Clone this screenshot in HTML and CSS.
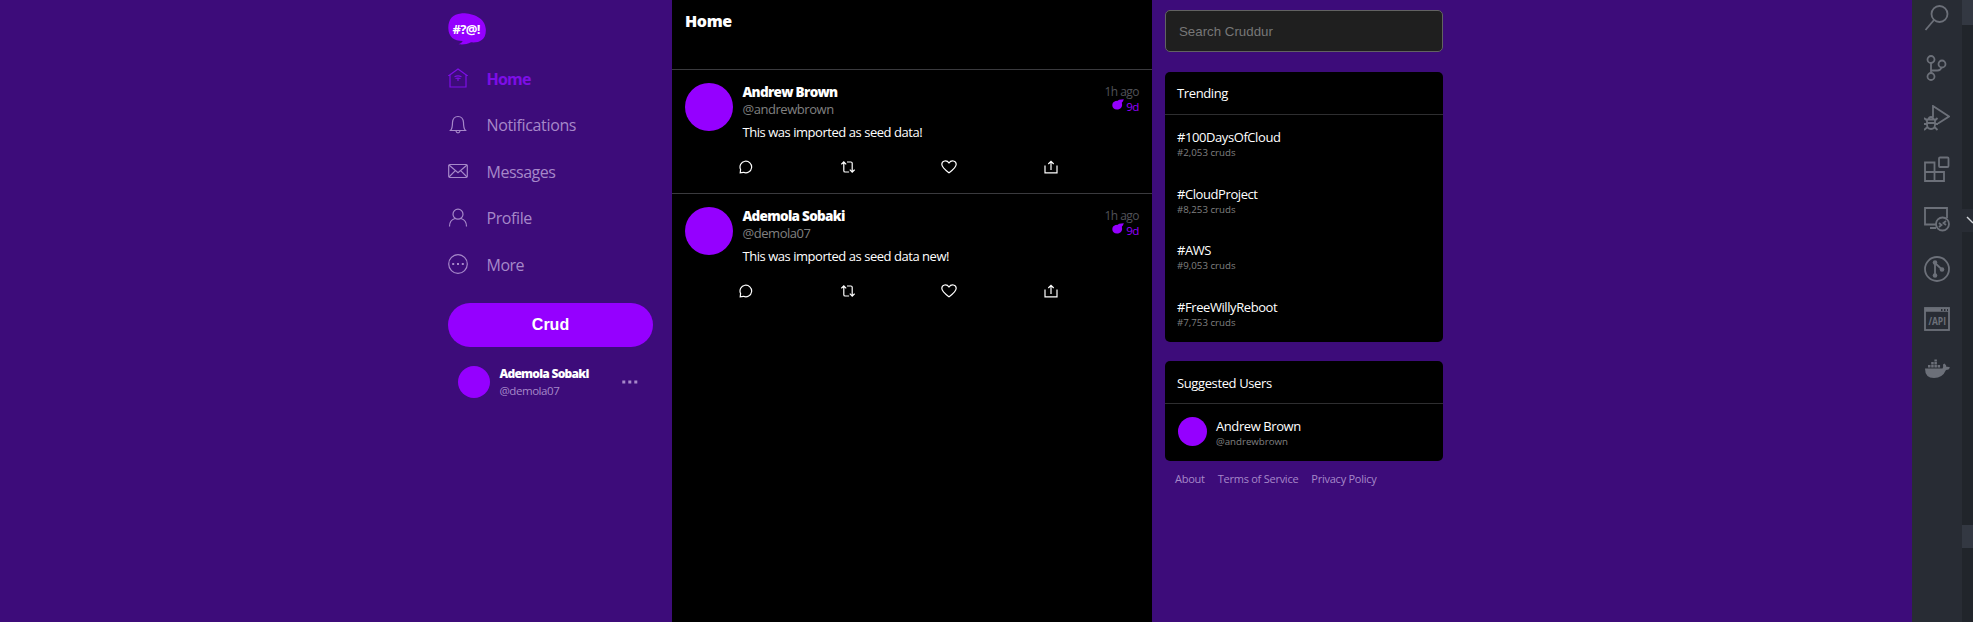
FILE: index.html
```
<!DOCTYPE html>
<html lang="en">
<head>
<meta charset="utf-8">
<title>Cruddur</title>
<link rel="stylesheet" href="styles.css">
</head>
<body>
<svg class="defs" aria-hidden="true">
  <symbol id="comment" viewBox="0 0 14 14"><path d="M1.200 12.800l.4-3.300A5.800 5.800 0 1 1 4.500 12.300z"/></symbol>
  <symbol id="repost" viewBox="0 0 14 14"><path d="M.4 4.300L2.800 1.900l2.400 2.400M2.800 2v8.700q0 1.300 1.300 1.300h4M6 2h3.900q1.300 0 1.300 1.300v8.700M8.800 9.700L11.200 12.100l2.400-2.400"/></symbol>
  <symbol id="heart" viewBox="0 0 16 14"><path d="M8 12.800C4.500 10.200.8 7.500.8 4.300.8.600 5.800-.300 8 3c2.200-3.300 7.200-2.400 7.200 1.300 0 3.200-3.700 5.900-7.200 8.500z"/></symbol>
  <symbol id="share" viewBox="0 0 14 14"><path d="M1 5.500v7.300h12V5.500M7 10V1.500M4.300 4L7 1.300 9.700 4"/></symbol>
  <symbol id="bomb" viewBox="0 0 12 12"><path fill="currentColor" stroke="none" d="M3.500 2L5.800 1.800 7 .800 11.800.300 11 2.300 9.800 3.700C11 8 8.500 10.500 5 10.500 2 10.500.300 8.500.300 6.200.300 4.200 1.500 2.600 3.500 2z"/></symbol>
</svg>
<div class="screen">
  <main class="app">
    <nav class="sidebar">
      <svg class="logo" viewBox="0 0 38 32"><path d="M13 .400C23-.300 37 4 37.800 16 38.500 27 31 30 23 29.300 19 31.500 15 31.700 10.500 31.300 13 30.300 14.500 29 14.600 28 6 28 .500 24 .300 15 .2 6 5 1 13 .400z"/><text x="4.500" y="20.500" textLength="28">#?@!</text></svg>
      <a class="link active"><svg viewBox="0 0 20 20"><path d="M1 7.500L10 1l9 6.500H18V19H2V7.500zM6.500 8.700q3.500-1.500 7 0M7.500 10.500q2.500-1 5 0M10 10v3"/></svg><span class="t-home">Home</span></a>
      <a class="link"><svg viewBox="0 0 20 20"><path d="M2.500 15.500q2-2 2-8Q5 1.500 10 1.500t5.500 6q0 6 2 8zM8 16q.300 1.800 2 1.800t2-1.800"/></svg><span class="t-notif">Notifications</span></a>
      <a class="link"><svg viewBox="0 0 20 20"><rect x=".7" y="3.500" width="18.600" height="13" rx="1.200"/><path d="M1 4l9 7.800L19 4M1 16l6.300-6.400M19 16l-6.300-6.400"/></svg><span class="t-msg">Messages</span></a>
      <a class="link"><svg viewBox="0 0 20 20"><circle cx="10" cy="6.200" r="5"/><path d="M1.500 18.500q0-6.500 5.500-8M18.500 18.500q0-6.500-5.500-8"/></svg><span class="t-prof">Profile</span></a>
      <a class="link"><svg viewBox="0 0 20 20"><circle cx="10" cy="10" r="9.300"/><path class="dots" d="M4.200 9h2v2h-2zM9 9h2v2H9zM13.800 9h2v2h-2z"/></svg><span class="t-more">More</span></a>
      <button class="crud">Crud</button>
      <div class="profile">
        <div class="avatar"></div>
        <div class="who"><b>Ademola Sobaki</b><span>@demola07</span></div>
        <svg class="more" viewBox="0 0 16 4"><path d="M.3.500h3v3h-3zM6.300.500h3v3h-3zM12.300.500h3v3h-3z"/></svg>
      </div>
    </nav>
    <section class="feed">
      <h1 class="heading"><span>Home</span></h1>
      <article class="activity">
        <div class="avatar"></div>
        <div class="body">
          <div class="name">Andrew Brown</div>
          <div class="handle">@andrewbrown</div>
          <p class="message">This was imported as seed data!</p>
          <div class="actions"><svg><use href="#comment"/></svg><svg><use href="#repost"/></svg><svg class="wide"><use href="#heart"/></svg><svg><use href="#share"/></svg></div>
        </div>
        <div class="times"><div class="ago">1h ago</div><div class="expires"><svg><use href="#bomb"/></svg><span>9d</span></div></div>
      </article>
      <article class="activity">
        <div class="avatar"></div>
        <div class="body">
          <div class="name">Ademola Sobaki</div>
          <div class="handle">@demola07</div>
          <p class="message">This was imported as seed data new!</p>
          <div class="actions"><svg><use href="#comment"/></svg><svg><use href="#repost"/></svg><svg class="wide"><use href="#heart"/></svg><svg><use href="#share"/></svg></div>
        </div>
        <div class="times"><div class="ago">1h ago</div><div class="expires"><svg><use href="#bomb"/></svg><span>9d</span></div></div>
      </article>
    </section>
    <aside class="aside">
      <input class="search" placeholder="Search Cruddur">
      <div class="card trending">
        <h2><span>Trending</span></h2>
        <div class="trend"><b>#100DaysOfCloud</b><span>#2,053 cruds</span></div>
        <div class="trend"><b>#CloudProject</b><span>#8,253 cruds</span></div>
        <div class="trend"><b>#AWS</b><span>#9,053 cruds</span></div>
        <div class="trend"><b>#FreeWillyReboot</b><span>#7,753 cruds</span></div>
      </div>
      <div class="card suggested">
        <h2><span>Suggested Users</span></h2>
        <div class="user"><div class="avatar"></div><div class="trend-user"><b>Andrew Brown</b><span>@andrewbrown</span></div></div>
      </div>
      <footer class="links"><a>About</a><a>Terms of Service</a><a>Privacy Policy</a></footer>
    </aside>
  </main>
  <div class="activitybar">
    <svg viewBox="0 0 26 26"><circle cx="15.500" cy="9" r="8"/><path d="M10 15L1.500 25"/></svg>
    <svg viewBox="0 0 26 26"><circle cx="7" cy="4.500" r="3.500"/><circle cx="18" cy="9" r="3.500"/><circle cx="7" cy="21.500" r="3.500"/><path d="M7 8v10M17.500 12.500q-1 3-4 3H7"/></svg>
    <svg viewBox="0 0 26 26"><path d="M9 12V1l16 10.500-11 7M3 14.500h8v5q0 4.500-4 4.500t-4-4.500zM4.500 14.500q.5-2.500 2.500-2.500t2.500 2.500M0 13l3 2.500M0 19h3M0 25l3.500-3M13.500 13L11 15.500M14 19h-3M13.500 25L10.500 22M3 18h8"/></svg>
    <svg viewBox="0 0 26 26"><path d="M1 6.500h9.500v9.500H20v9H1zM1 16h9.500v9"/><rect x="15" y="1.500" width="9.500" height="9.500" rx="1"/></svg>
    <svg viewBox="0 0 26 26"><path d="M12 18.500H1V2h22v10M6 22h6"/><circle cx="18.500" cy="18" r="6.500"/><path d="M15 17l2.500 2-2.500 2M22 15l-2.500 2 2.500 2"/></svg>
    <svg viewBox="0 0 26 26"><circle cx="13" cy="13" r="12"/><path d="M11 6v14M11 7l7 6.500"/><g class="solid"><circle cx="11" cy="6.500" r="2.300"/><circle cx="11" cy="19.500" r="2.300"/><circle cx="18" cy="13.500" r="2.300"/></g></svg>
    <svg viewBox="0 0 26 26"><rect x="1" y="2" width="24" height="22"/><path d="M1 4h24" stroke-width="3.500"/><path class="holes" d="M17 4h1.500M20 4h1.500M23 4h1"/><text x="4.500" y="18.500" textLength="17.500" lengthAdjust="spacingAndGlyphs">/API</text></svg>
    <svg viewBox="0 0 26 26"><path class="solid" d="M1 12.500h17.500q1-1 .5-4l1.500-1q2 1.500 2 3.500 2-.5 3.500.500-1 2.500-4 2.500Q18.500 22 10 22 1 22 1 12.500zM4 9h2.500v2.500H4zM7.200 9h2.500v2.500H7.200zM10.400 9h2.500v2.500h-2.500zM13.600 9h2.500v2.500h-2.500zM7.200 6h2.500v2.500H7.200zM10.400 6h2.500v2.500h-2.500zM10.400 3.500h2.500V5.500h-2.500z"/></svg>
  </div>
  <div class="panel">
    <div class="tab"></div>
    <div class="section"><svg viewBox="0 0 11 23"><path d="M5 8l6 6"/></svg></div>
    <div class="row"></div>
  </div>
</div>
</body>
</html>
```
FILE: styles.css
```
* { box-sizing: border-box; }
body { margin: 0; background: #3d0c7a; font-family: "Open Sans", "Noto Sans", sans-serif; color: #fff; overflow: hidden; }
.defs { position: absolute; width: 0; height: 0; }
svg { fill: none; stroke: currentColor; flex: none; }
.screen { display: flex; height: 622px; }
.app { width: 1912px; display: grid; grid-template-columns: 224px 480px 304px; justify-content: center; padding-right: 8px; }
.avatar { background: #9500ff; border-radius: 50%; flex: none; }

.sidebar { padding: 13px 19px 0 0; color: #a688c9; display: flex; flex-direction: column; }
.logo { width: 38px; height: 32px; margin-bottom: 10px; fill: #9500ff; stroke: none; }
.logo text { fill: #fff; font-size: 13px; font-weight: 700; }
.link { height: 46.5px; display: flex; align-items: center; gap: 19px; font-size: 16px; line-height: 22px; }
.link svg { width: 20px; height: 20px; stroke-width: 1.2; }
.link span { margin-left: -.5px; padding-top: 1px; }
.link.active { color: #7d0ee6; font-weight: 700; }
.dots { fill: currentColor; stroke: none; }
.t-home { letter-spacing: -.8px; }
.t-notif { letter-spacing: -.35px; }
.t-msg { letter-spacing: -.5px; }
.t-prof { letter-spacing: -.4px; }
.t-more { letter-spacing: -.5px; }
.crud { height: 44px; flex: none; margin-top: 15px; border: 0; border-radius: 22px; background: #9500ff; color: #fff; font: 700 16px/20px "Liberation Sans", Arial, sans-serif; }
.profile { display: flex; align-items: center; padding: 0 15px 0 10px; margin-top: 17px; height: 36px; }
.profile .avatar { width: 32px; height: 32px; }
.who { flex: 1; margin-left: 9.500px; display: flex; flex-direction: column; line-height: 17px; }
.who b { font-size: 12px; font-weight: 800; color: #fff; letter-spacing: -.75px; white-space: nowrap; }
.who span { font-size: 11.500px; letter-spacing: -.45px; }
.more { width: 16px; height: 4px; fill: currentColor; stroke: none; }

.feed { background: #000; }
.heading { height: 70px; margin: 0; padding: 10px 13px; border-bottom: 1px solid #3a3a3e; font-size: 16px; line-height: 22px; font-weight: 800; letter-spacing: -.4px; }
.activity { height: 123px; padding: 13px 13px 0; display: flex; }
.activity + .activity { border-top: 1px solid #3a3a3e; }
.activity .avatar { width: 48px; height: 48px; }
.body { margin-left: 9.500px; width: 320px; white-space: nowrap; }
.name { margin-top: -1px; font-size: 13.500px; font-weight: 800; line-height: 20px; letter-spacing: -.7px; }
.handle { font-size: 13px; line-height: 15px; color: #808080; letter-spacing: -.45px; }
.message { margin: 5px 0 0; font-size: 13px; line-height: 20px; letter-spacing: -.46px; }
.actions { display: grid; grid-template-columns: repeat(4, 101.500px); margin: 18px 0 0 -3.500px; }
.actions svg { width: 14px; height: 14px; stroke-width: 1.2; }
.actions .wide { width: 16px; margin-left: -1px; }
.times { margin-left: auto; text-align: right; font-size: 12px; line-height: 15px; }
.ago { color: #515259; letter-spacing: -.55px; padding-top: 1px; }
.expires { color: #9500ff; font-size: 11.500px; letter-spacing: -.4px; display: flex; justify-content: flex-end; gap: 2px; }
.expires svg { width: 12px; height: 12px; }

.aside { padding: 10px 13px; }
.search { display: block; width: 278px; height: 42px; border: 1px solid #626262; border-radius: 5px; background: #1f1f1f; padding: 0 13px; font: 13.300px "Liberation Sans", Arial, sans-serif; }
.search::placeholder { color: #777; }
.card { width: 278px; margin-top: 20px; border-radius: 5px; background: #000; }
.card h2 { height: 43px; margin: 0; padding: 11px 12px 0; border-bottom: 1px solid #2e2e30; font-size: 13px; font-weight: 400; line-height: 20px; letter-spacing: -.38px; }
.card b { display: block; font-size: 13px; font-weight: 400; line-height: 18px; letter-spacing: -.42px; }
.card b + span { display: block; font-size: 9.700px; line-height: 13px; color: #808080; }
.trending { height: 270px; }
.trend { height: 56.500px; padding: 13px 12px 0; }
.suggested { height: 100px; margin-top: 19px; }
.suggested h2 { padding-top: 12px; }
.user { display: flex; padding: 13px 13px 0; }
.user .avatar { width: 29px; height: 29px; margin-right: 9px; }
.links { display: flex; gap: 13px; padding: 10px 0 0 10px; font-size: 11px; line-height: 16px; color: #a688c9; letter-spacing: -.25px; white-space: nowrap; }

.activitybar { width: 50px; background: #282c34; color: #6c7079; display: flex; flex-direction: column; align-items: center; gap: 24.200px; padding-top: 5px; }
.activitybar svg { width: 26px; height: 26px; stroke-width: 1.8; }
.activitybar .solid { fill: currentColor; stroke: none; }
.activitybar .holes { stroke: #282c34; }
.activitybar text { fill: currentColor; stroke: none; font-size: 10px; font-weight: 700; }
.panel { width: 11px; background: #21252b; }
.tab { height: 25px; background: #333842; }
.section { height: 23px; margin-top: 184px; background: #282c34; color: #d0d3d8; }
.section svg { display: block; width: 11px; height: 23px; stroke-width: 1.4; }
.row { height: 23px; margin-top: 293px; background: #333842; }
```
